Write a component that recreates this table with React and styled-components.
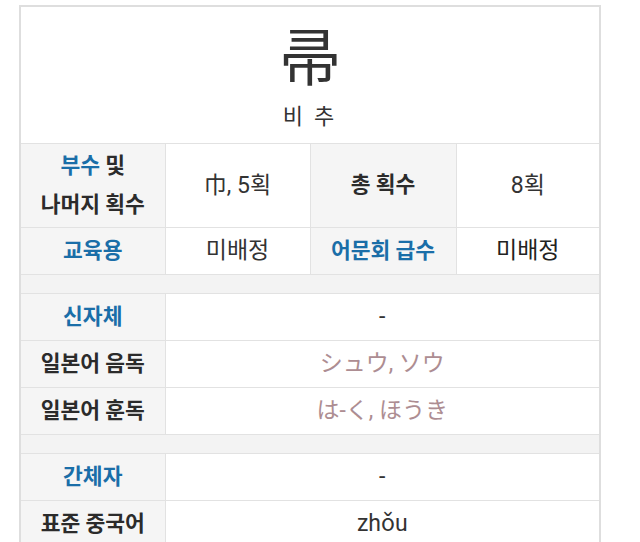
import React from 'react';
import styled, { createGlobalStyle } from 'styled-components';

const GlobalStyle = createGlobalStyle`
  html, body {
    margin: 0;
    padding: 0;
    background: #ffffff;
  }
  body {
    font-family: Roboto, "Noto Sans CJK KR", "Noto Sans", sans-serif;
    color: #333;
  }
`;

const Page = styled.div`
  padding: 5px 0 0 19px;
`;

const Table = styled.table`
  width: 582px;
  border-collapse: collapse;
  table-layout: fixed;
  border: 2px solid #dedede;
`;

const Cell = styled.td`
  border: 1px solid #e2e2e2;
  text-align: center;
  vertical-align: middle;
  padding: 0 2px;
  height: ${(p) => p.$h || 46}px;
  background: ${(p) => (p.$label ? '#f5f5f5' : '#ffffff')};
  font-size: ${(p) => (p.$label ? 21.5 : 23)}px;
  font-weight: ${(p) => (p.$label ? 700 : 400)};
  color: ${(p) => p.$color || (p.$label ? '#2b2b2b' : '#333')};
  line-height: 1.8;
  white-space: nowrap;
`;

const HeaderCell = styled.td`
  border: 1px solid #e2e2e2;
  height: 136px;
  text-align: center;
  vertical-align: top;
  padding: 0;
`;

const Hanja = styled.div`
  font-family: "Noto Sans CJK SC", "Noto Sans CJK KR", sans-serif;
  font-size: 62px;
  line-height: 1;
  color: #333;
  margin-top: 16px;
`;

const Reading = styled.div`
  font-family: "Noto Sans CJK KR", sans-serif;
  font-size: 22px;
  letter-spacing: 3px;
  color: #333;
  margin-top: 13px;
`;

const Spacer = styled.td`
  height: 16px;
  background: #f3f3f3;
  border: 1px solid #e2e2e2;
`;

const Blue = styled.span`
  color: #1a6ea8;
`;

const JA = '#ad8d92';

export default function App() {
  return (
    <Page>
      <GlobalStyle />
      <Table>
        <colgroup>
          <col style={{ width: 145 }} />
          <col style={{ width: 145 }} />
          <col style={{ width: 146 }} />
          <col style={{ width: 144 }} />
        </colgroup>
        <tbody>
          <tr>
            <HeaderCell colSpan={4}>
              <Hanja>帚</Hanja>
              <Reading>비 추</Reading>
            </HeaderCell>
          </tr>
          <tr>
            <Cell $label $h={83}>
              <Blue>부수</Blue> 및<br />나머지 획수
            </Cell>
            <Cell $h={83}>巾, 5획</Cell>
            <Cell $label $h={83}>총 획수</Cell>
            <Cell $h={83}>8획</Cell>
          </tr>
          <tr>
            <Cell $label $color="#1a6ea8">교육용</Cell>
            <Cell>미배정</Cell>
            <Cell $label $color="#1a6ea8">어문회 급수</Cell>
            <Cell $color="#222">미배정</Cell>
          </tr>
          <tr>
            <Spacer colSpan={4} />
          </tr>
          <tr>
            <Cell $label $color="#1a6ea8">신자체</Cell>
            <Cell colSpan={3}>-</Cell>
          </tr>
          <tr>
            <Cell $label>일본어 음독</Cell>
            <Cell colSpan={3} $color={JA}>シュウ, ソウ</Cell>
          </tr>
          <tr>
            <Cell $label>일본어 훈독</Cell>
            <Cell colSpan={3} $color={JA}>は-く, ほうき</Cell>
          </tr>
          <tr>
            <Spacer colSpan={4} />
          </tr>
          <tr>
            <Cell $label $color="#1a6ea8">간체자</Cell>
            <Cell colSpan={3}>-</Cell>
          </tr>
          <tr>
            <Cell $label>표준 중국어</Cell>
            <Cell colSpan={3}>zhǒu</Cell>
          </tr>
        </tbody>
      </Table>
    </Page>
  );
}
